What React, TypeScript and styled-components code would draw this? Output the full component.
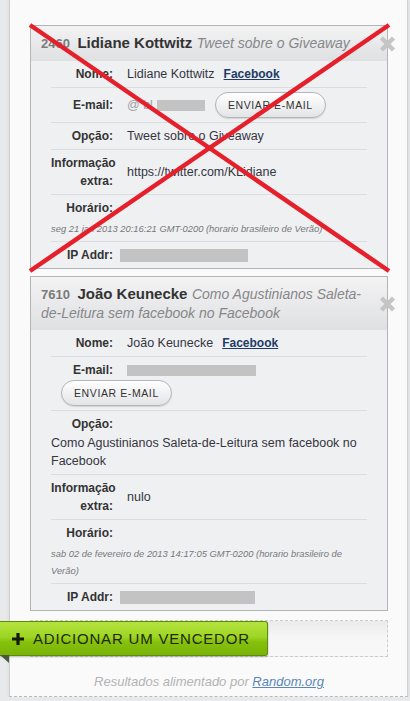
import styled, { createGlobalStyle } from "styled-components"

const GlobalStyle = createGlobalStyle`
    html, body {
        margin: 0;
        padding: 0;
        background: #e8e9eb;
    }
    body {
        font-family: "Liberation Sans", Arial, sans-serif;
    }
`

interface Entry {
    id: string
    name: string
    option: string
    emailPrefix?: string
    emailMask: number
    extra: string
    date: string
    ipMask: number
    crossed?: boolean
}

const entries: Entry[] = [
    {
        id: "2460",
        name: "Lidiane Kottwitz",
        option: "Tweet sobre o Giveaway",
        emailPrefix: "@ bl",
        emailMask: 48,
        extra: "https://twitter.com/KLidiane",
        date: "seg 21 jan 2013 20:16:21 GMT-0200 (horario brasileiro de Verão)",
        ipMask: 128,
        crossed: true,
    },
    {
        id: "7610",
        name: "João Keunecke",
        option: "Como Agustinianos Saleta-de-Leitura sem facebook no Facebook",
        emailMask: 129,
        extra: "nulo",
        date: "sab 02 de fevereiro de 2013 14:17:05 GMT-0200 (horario brasileiro de Verão)",
        ipMask: 135,
    },
]

function CloseIcon() {
    return (
        <Close width="17" height="17" viewBox="0 0 17 17">
            <path d="M2.5 2.5 L14.5 14.5 M14.5 2.5 L2.5 14.5" stroke="#c5c5c6" strokeWidth="4.4" />
        </Close>
    )
}

function WinnerCard({ entry }: { entry: Entry }) {
    return (
        <Card>
            <CardHeader>
                <Num>{entry.id}</Num> <Name>{entry.name}</Name> <OptionTitle>{entry.option}</OptionTitle>
                <CloseIcon />
            </CardHeader>
            <CardBody>
                <Row>
                    <Label>Nome:</Label>
                    <Value>
                        {entry.name}
                        <FbLink href="#">Facebook</FbLink>
                    </Value>
                </Row>
                <Row>
                    <Label>E-mail:</Label>
                    <Value>
                        {entry.emailPrefix && <Faded>{entry.emailPrefix}</Faded>}
                        <Mask w={entry.emailMask} h={11} />
                    </Value>
                    <MailButton>ENVIAR E-MAIL</MailButton>
                </Row>
                <Row>
                    <Label>Opção:</Label>
                    <Value>{entry.option}</Value>
                </Row>
                <Row>
                    <Label>Informação extra:</Label>
                    <Value>{entry.extra}</Value>
                </Row>
                <Row>
                    <Label>Horário:</Label>
                    <DateText>{entry.date}</DateText>
                </Row>
                <Row>
                    <Label tight>IP Addr:</Label>
                    <Mask w={entry.ipMask} h={13} />
                </Row>
            </CardBody>
            {entry.crossed && (
                <Cross>
                    <line x1="0" y1="0" x2="100%" y2="100%" />
                    <line x1="100%" y1="0" x2="0" y2="100%" />
                </Cross>
            )}
        </Card>
    )
}

export default function App() {
    return (
        <>
            <GlobalStyle />
            <Panel>
                <Cards>
                    {entries.map((e) => (
                        <WinnerCard key={e.id} entry={e} />
                    ))}
                </Cards>
                <AddArea>
                    <AddButton>
                        <svg width="12" height="12" viewBox="0 0 12 12">
                            <path d="M6 0 V12 M0 6 H12" stroke="#141a08" strokeWidth="3.2" />
                        </svg>
                        ADICIONAR UM VENCEDOR
                    </AddButton>
                </AddArea>
                <Footer>
                    Resultados alimentado por <FooterLink href="#">Random.org</FooterLink>
                </Footer>
            </Panel>
        </>
    )
}

const Panel = styled.div`
    box-sizing: border-box;
    width: 399px;
    margin-left: 9px;
    padding: 25px 19px 0 20px;
    background: #fafafa;
    border-left: 1px solid #cfd0d3;
    border-right: 1px solid #cfd0d3;
    border-bottom: 1px dashed #b8b8b8;
    box-shadow: 0 0 4px rgba(0, 0, 0, 0.08);
`

const Cards = styled.div`
    display: flex;
    flex-direction: column;
    gap: 7px;
`

const Card = styled.div`
    position: relative;
    border: 1px solid #b2b4b7;
    background: #eff0f2;
`

const CardHeader = styled.div`
    position: relative;
    padding: 8px 25px 8px 10px;
    line-height: 18px;
    background: linear-gradient(#f3f3f4, #dfe0e2);
`

const Num = styled.span`
    font-size: 13px;
    font-weight: bold;
    color: #7a7a7b;
    margin-right: 3px;
`

const Name = styled.span`
    font-size: 15px;
    font-weight: bold;
    color: #333;
`

const OptionTitle = styled.span`
    font-size: 14px;
    font-style: italic;
    color: #878789;
`

const Close = styled.svg`
    position: absolute;
    right: -9px;
    top: 50%;
    transform: translateY(-50%);
`

const CardBody = styled.div`
    padding: 0 20px;
`

const Row = styled.div`
    display: flex;
    flex-wrap: wrap;
    align-items: center;
    row-gap: 1px;
    padding: 4px 0;
    border-bottom: 1px solid #dcdde0;

    &:last-child {
        border-bottom: none;
    }
`

const Label = styled.div<{ tight?: boolean }>`
    box-sizing: border-box;
    flex: 0 0 66px;
    width: 66px;
    margin-right: ${({ tight }) => (tight ? "3px" : "10px")};
    padding-right: 4px;
    text-align: right;
    font-size: 12px;
    font-weight: bold;
    line-height: 18px;
    color: #333;
`

const Value = styled.div`
    display: flex;
    align-items: center;
    flex: 0 1 auto;
    font-size: 12.5px;
    line-height: 18px;
    color: #35353f;
`

const FbLink = styled.a`
    margin-left: 9px;
    font-size: 12px;
    font-weight: bold;
    color: #203b66;
    text-decoration: underline;
`

const Faded = styled.span`
    color: #a0a0a3;
    margin-right: 4px;
`

const Mask = styled.span<{ w: number; h: number }>`
    display: inline-block;
    width: ${({ w }) => `${w}px`};
    height: ${({ h }) => `${h}px`};
    background: #c3c3c3;
`

const MailButton = styled.button`
    box-sizing: border-box;
    height: 26px;
    margin-left: 10px;
    padding: 0 12px;
    border: 1px solid #b3b5b8;
    border-radius: 13px;
    background: linear-gradient(#ffffff, #e3e4e6);
    box-shadow: 0 1px 1px rgba(0, 0, 0, 0.12);
    font-family: "Liberation Sans", Arial, sans-serif;
    font-size: 10.5px;
    letter-spacing: 0.6px;
    color: #333;
`

const DateText = styled.div`
    flex: 0 1 auto;
    margin-top: 2px;
    font-size: 9.4px;
    font-style: italic;
    line-height: 17px;
    color: #77777a;
`

const Cross = styled.svg`
    position: absolute;
    left: -1px;
    top: -1px;
    width: calc(100% + 3px);
    height: calc(100% + 4px);
    overflow: visible;
    pointer-events: none;

    line {
        stroke: #e5202b;
        stroke-width: 4.5;
    }
`

const AddArea = styled.div`
    height: 35px;
    margin-top: 9px;
    border: 1px dashed #cdcdcd;
    background: linear-gradient(#ebebeb, #f6f6f6 45%, #f8f8f8);
`

const AddButton = styled.div`
    position: relative;
    box-sizing: border-box;
    display: flex;
    align-items: center;
    gap: 9px;
    width: 268px;
    height: 35px;
    margin-left: -31px;
    padding-left: 12px;
    background: linear-gradient(#b4e33e, #9ed524 45%, #86c10d 60%, #79b308);
    border: 1px solid #5d8c06;
    border-left: none;
    border-radius: 0 3px 3px 0;
    box-shadow: 0 1px 2px rgba(0, 0, 0, 0.25);
    font-size: 15px;
    letter-spacing: 0.8px;
    color: #1d2908;

    &::after {
        content: "";
        position: absolute;
        left: 0;
        top: 100%;
        width: 0;
        height: 0;
        border-top: 8px solid #4c593a;
        border-left: 9px solid transparent;
    }
`

const Footer = styled.div`
    margin-top: 17px;
    padding-bottom: 6px;
    text-align: center;
    font-size: 13px;
    font-style: italic;
    line-height: 16px;
    color: #b3b3b5;
`

const FooterLink = styled.a`
    color: #5a87b7;
    text-decoration: underline;
`
